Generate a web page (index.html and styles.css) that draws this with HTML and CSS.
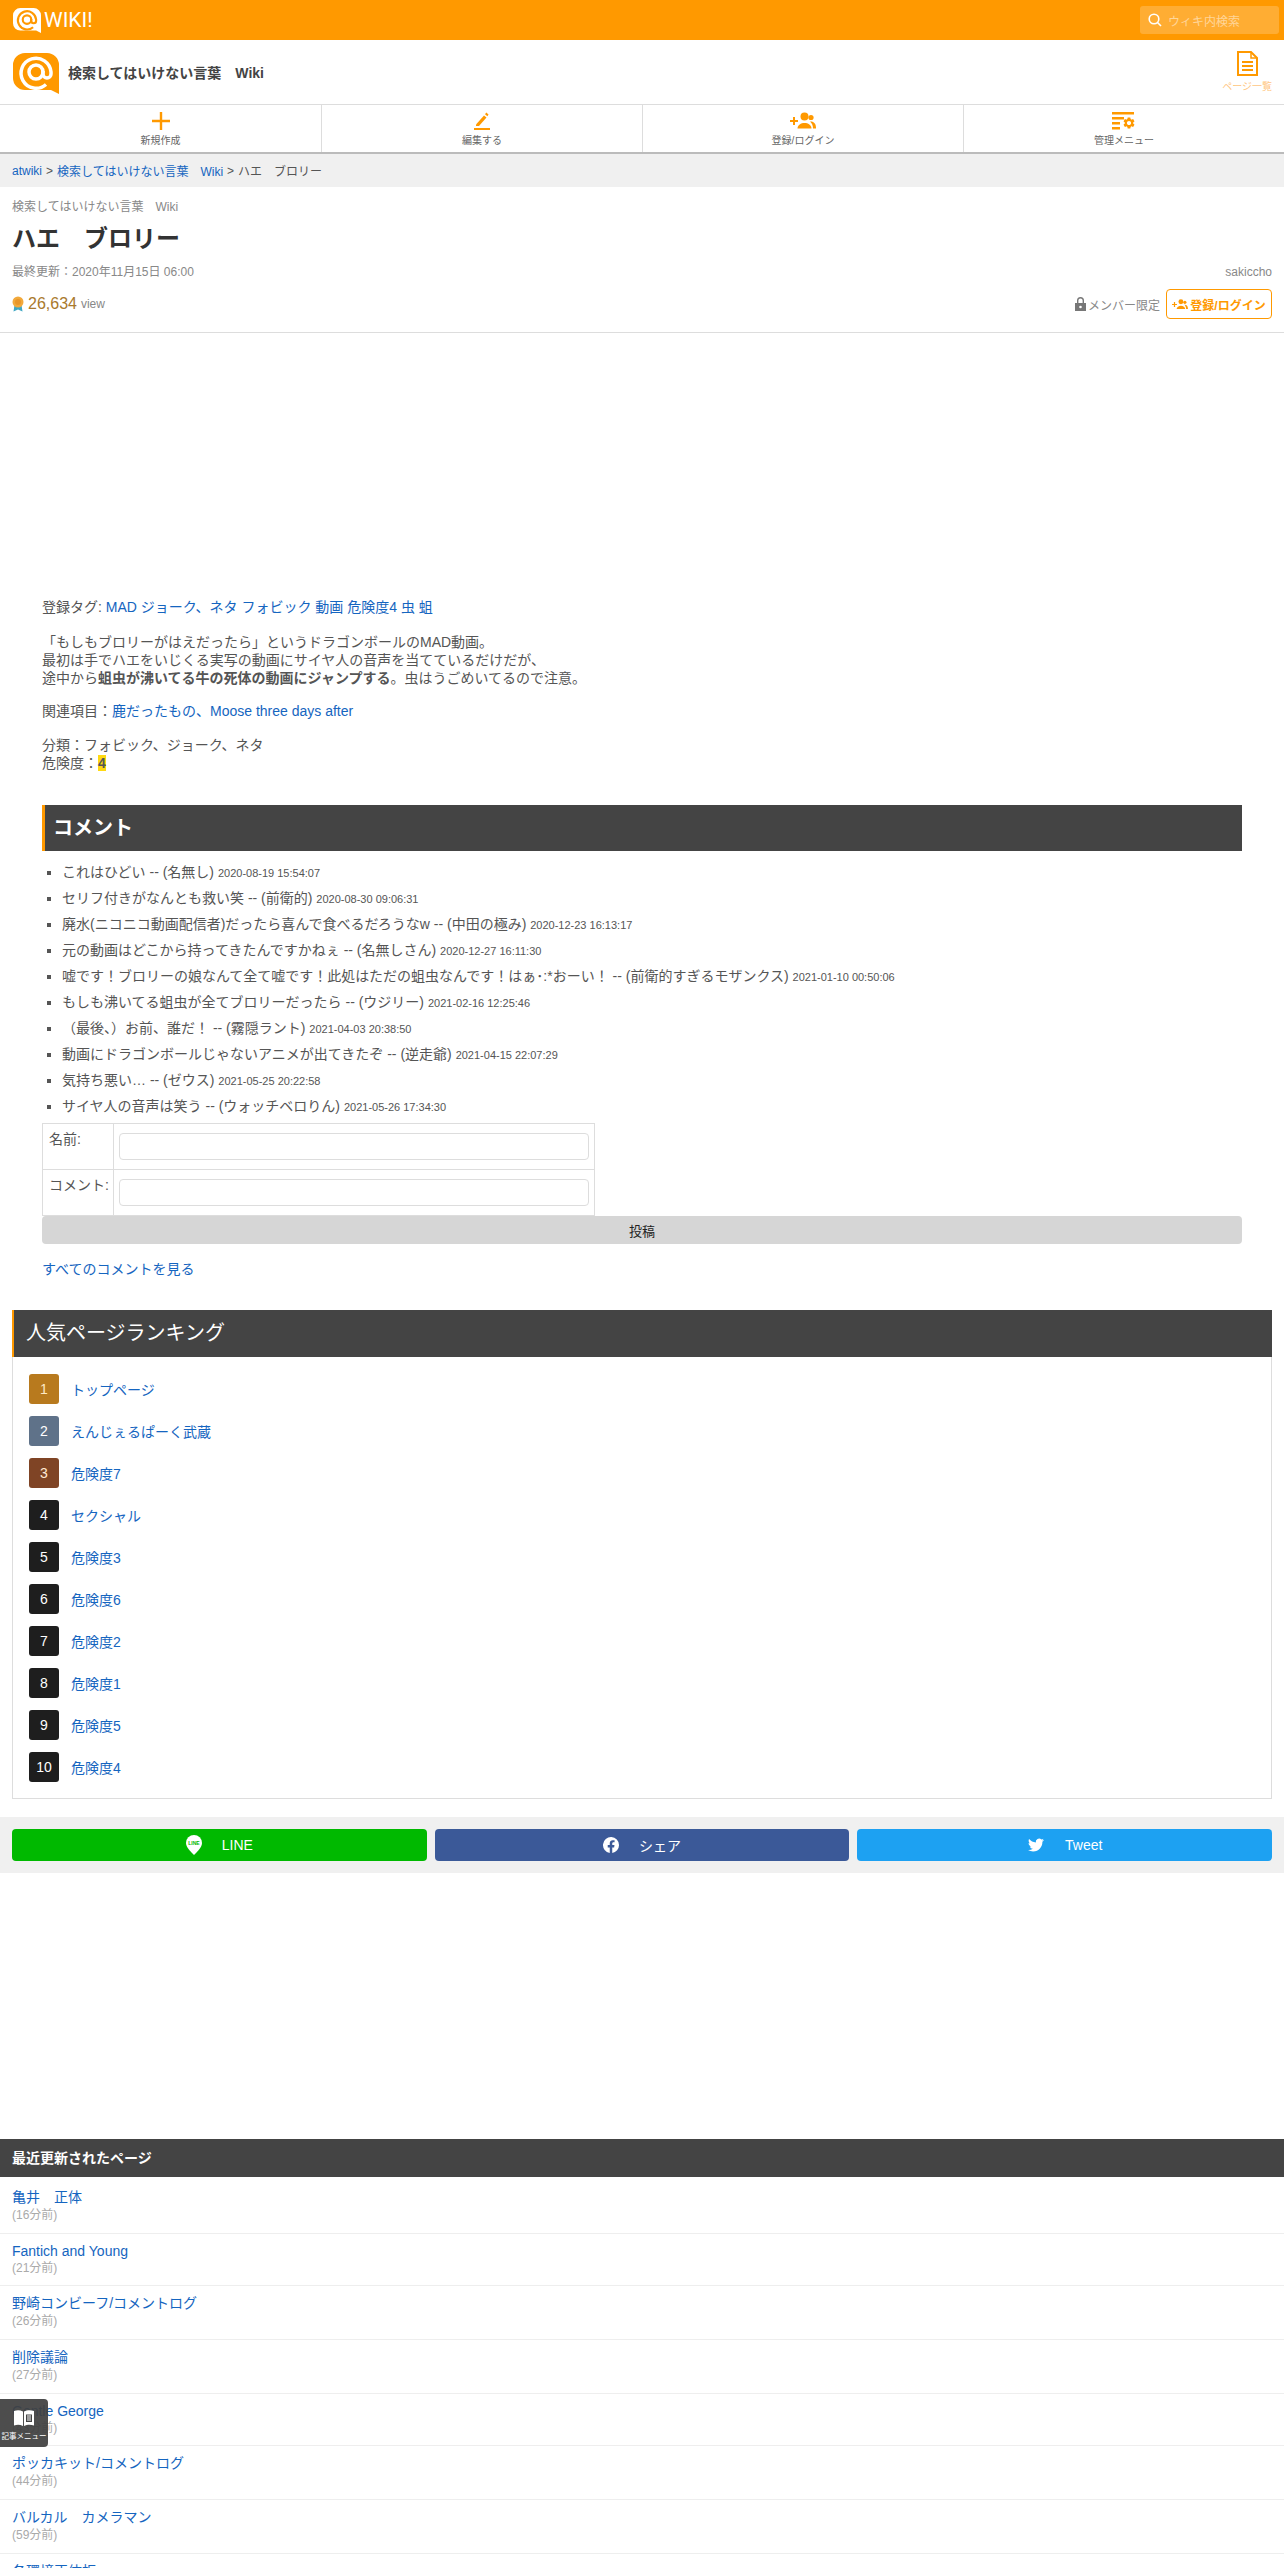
FILE: index.html
```html
<!DOCTYPE html>
<html lang="ja">
<head>
    <meta charset="UTF-8">
    <title>ハエ　ブロリー - 検索してはいけない言葉　Wiki</title>
    <link rel="stylesheet" href="styles.css">
</head>
<body>
<svg class="defs" width="0" height="0">
    <symbol id="at-logo" viewBox="0 0 46 41">
        <path class="logo-bubble" d="M12 0H34A12 12 0 0 1 46 12V41L38 37H12A12 12 0 0 1 0 25V12A12 12 0 0 1 12 0Z"/>
        <circle class="logo-at" cx="23" cy="19" r="7"/>
        <path class="logo-at" d="M33 31.5A15 15 0 1 1 38 19V21A4 4 0 0 1 30 21V18"/>
    </symbol>
    <symbol id="people-plus" viewBox="0 0 26 18">
        <path d="M0 8h3V5h2v3h3v2H5v3H3v-3H0z"/>
        <circle cx="14.5" cy="4.5" r="4"/>
        <path d="M7.5 16.500c0-3.500 3.500-5.500 7-5.500s7 2 7 5.500z"/>
        <circle cx="21" cy="5.500" r="2.600"/>
        <path d="M20 9.500c3.500-.5 6 2 6 6v1h-3c0-2.800-1-5.300-3-7z"/>
    </symbol>
</svg>

<header class="topbar">
    <a class="brand" href="#">
        <svg class="brand-logo" width="28" height="25"><use href="#at-logo"/></svg>
        <span class="brand-text">WIKI!</span>
    </a>
    <div class="search">
        <svg width="14" height="14" viewBox="0 0 14 14" fill="none" stroke="#fff" stroke-width="1.600"><circle cx="6" cy="6" r="4.800"/><path d="M9.500 9.500L13 13"/></svg>
        <span>ウィキ内検索</span>
    </div>
</header>

<div class="site-row">
    <svg class="site-logo" width="46" height="41"><use href="#at-logo"/></svg>
    <a class="site-title" href="#">検索してはいけない言葉　Wiki</a>
    <a class="page-list" href="#">
        <svg width="21" height="25" viewBox="0 0 21 25" fill="none" stroke="#f90" stroke-width="2"><path d="M1 1H14L20 7V24H1Z"/><path d="M14 1V7H20" stroke-width="1.500"/><path d="M5 11H16M5 15H16M5 19H16"/></svg>
        <span>ページ一覧</span>
    </a>
</div>

<nav class="nav">
    <a class="nav-item" href="#">
        <svg width="18" height="18" viewBox="0 0 18 18" fill="none" stroke="#f90" stroke-width="2.400"><path d="M9 0V18M0 9H18"/></svg>
        <span>新規作成</span>
    </a>
    <a class="nav-item" href="#">
        <svg width="18" height="18" viewBox="0 0 18 18" fill="#f90"><path d="M3 12.500L11 3.500L13.500 5.500L6 14H3z"/><path d="M12 2.300L13.300 .5L15.500 2.500L14.400 4.300z"/><path d="M1 16h16v2H1z"/></svg>
        <span>編集する</span>
    </a>
    <a class="nav-item" href="#">
        <svg class="orange-icon" width="26" height="18"><use href="#people-plus"/></svg>
        <span>登録/ログイン</span>
    </a>
    <a class="nav-item" href="#">
        <svg width="24" height="18" viewBox="0 0 24 18" fill="#f90"><path d="M0 0h22v2.500H0zM0 5h12v2.500H0zM0 10h8v2.500H0zM0 15h8v2.500H0z"/><svg x="10" y="4" width="14" height="14" viewBox="0 0 24 24"><path d="M19.140 12.940c.04-.3.06-.61.06-.94 0-.32-.02-.64-.07-.94l2.030-1.580a.49.49 0 0 0 .12-.61l-1.920-3.320a.488.488 0 0 0-.59-.22l-2.390.96c-.5-.38-1.030-.7-1.620-.94l-.36-2.540a.484.484 0 0 0-.48-.41h-3.840c-.24 0-.43.17-.47.41l-.36 2.540c-.59.24-1.130.57-1.620.94l-2.390-.96c-.22-.08-.47 0-.59.22L2.740 8.870c-.12.21-.08.47.12.61l2.030 1.580c-.05.3-.09.63-.09.94s.02.64.07.94l-2.030 1.580a.49.49 0 0 0-.12.61l1.920 3.320c.12.22.37.29.59.22l2.390-.96c.5.38 1.030.7 1.620.94l.36 2.540c.05.24.24.41.48.41h3.840c.24 0 .44-.17.47-.41l.36-2.540c.59-.24 1.130-.56 1.620-.94l2.390.96c.22.08.47 0 .59-.22l1.920-3.320c.12-.22.07-.47-.12-.61l-2.010-1.580zM12 15.600c-1.980 0-3.600-1.620-3.600-3.600s1.620-3.600 3.600-3.600 3.600 1.620 3.600 3.600-1.620 3.600-3.600 3.600z"/></svg></svg>
        <span>管理メニュー</span>
    </a>
</nav>

<div class="breadcrumb">
    <a href="#">atwiki</a><span class="sep">&gt;</span><a href="#">検索してはいけない言葉　Wiki</a><span class="sep">&gt;</span>ハエ　ブロリー
</div>

<section class="page-head">
    <div class="wiki-name">検索してはいけない言葉　Wiki</div>
    <h1>ハエ　ブロリー</h1>
    <div class="meta-row">
        <span>最終更新：2020年11月15日 06:00</span>
        <span>sakiccho</span>
    </div>
    <div class="foot-row">
        <div class="views">
            <svg width="12" height="16" viewBox="0 0 12 16"><path d="M2.500 9L1.500 15.500L6 13.500L10.500 15.500L9.500 9z" fill="#3fa7c4"/><circle cx="6" cy="6" r="5.500" fill="#f2a93b"/><circle cx="6" cy="6" r="3" fill="#e8962a"/></svg>
            <span class="view-count">26,634</span>
            <span>view</span>
        </div>
        <div class="member">
            <svg width="11" height="14" viewBox="0 0 11 14" fill="#777"><path d="M0 6h11v8H0z"/><path d="M2 6V3.500a3.500 3.500 0 0 1 7 0V6H7.600V3.500a2.100 2.100 0 0 0-4.200 0V6z"/><circle cx="5.500" cy="10" r="1.300" fill="#fff"/></svg>
            <span>メンバー限定</span>
            <a class="login-btn" href="#">
                <svg class="orange-icon" width="16" height="11"><use href="#people-plus"/></svg>
                登録/ログイン
            </a>
        </div>
    </div>
</section>

<div class="ad-space"></div>

<main class="article">
    <p>登録タグ: <a href="#">MAD</a> <a href="#">ジョーク、ネタ</a> <a href="#">フォビック</a> <a href="#">動画</a> <a href="#">危険度4</a> <a href="#">虫</a> <a href="#">蛆</a></p>
    <p class="gap-17">「もしもブロリーがはえだったら」というドラゴンボールのMAD動画。<br>
    最初は手でハエをいじくる実写の動画にサイヤ人の音声を当てているだけだが、<br>
    途中から<strong>蛆虫が沸いてる牛の死体の動画にジャンプする</strong>。虫はうごめいてるので注意。</p>
    <p class="gap-15">関連項目：<a href="#">鹿だったもの、Moose three days after</a></p>
    <p class="gap-16">分類：フォビック、ジョーク、ネタ<br>
    危険度：<span class="danger">4</span></p>

    <h2 class="comment-title">コメント</h2>
    <ul class="comments">
        <li>これはひどい -- (名無し) <small>2020-08-19 15:54:07</small></li>
        <li>セリフ付きがなんとも救い笑 -- (前衛的) <small>2020-08-30 09:06:31</small></li>
        <li>廃水(ニコニコ動画配信者)だったら喜んで食べるだろうなw -- (中田の極み) <small>2020-12-23 16:13:17</small></li>
        <li>元の動画はどこから持ってきたんですかねぇ -- (名無しさん) <small>2020-12-27 16:11:30</small></li>
        <li>嘘です！ブロリーの娘なんて全て嘘です！此処はただの蛆虫なんです！はぁ･:*おーい！ -- (前衛的すぎるモザンクス) <small>2021-01-10 00:50:06</small></li>
        <li>もしも沸いてる蛆虫が全てブロリーだったら -- (ウジリー) <small>2021-02-16 12:25:46</small></li>
        <li>（最後、）お前、誰だ！ -- (霧隠ラント) <small>2021-04-03 20:38:50</small></li>
        <li>動画にドラゴンボールじゃないアニメが出てきたぞ -- (逆走爺) <small>2021-04-15 22:07:29</small></li>
        <li>気持ち悪い… -- (ゼウス) <small>2021-05-25 20:22:58</small></li>
        <li>サイヤ人の音声は笑う -- (ウォッチベロりん) <small>2021-05-26 17:34:30</small></li>
    </ul>
    <table class="comment-form">
        <tr>
            <th>名前:</th>
            <td><input type="text"></td>
        </tr>
        <tr>
            <th>コメント:</th>
            <td><input type="text"></td>
        </tr>
    </table>
    <button class="post-btn">投稿</button>
    <p class="all-comments"><a href="#">すべてのコメントを見る</a></p>
</main>

<section class="ranking">
    <h2>人気ページランキング</h2>
    <ol class="rank-list">
        <li><span class="rank rank-1">1</span><a href="#">トップページ</a></li>
        <li><span class="rank rank-2">2</span><a href="#">えんじぇるぱーく武蔵</a></li>
        <li><span class="rank rank-3">3</span><a href="#">危険度7</a></li>
        <li><span class="rank">4</span><a href="#">セクシャル</a></li>
        <li><span class="rank">5</span><a href="#">危険度3</a></li>
        <li><span class="rank">6</span><a href="#">危険度6</a></li>
        <li><span class="rank">7</span><a href="#">危険度2</a></li>
        <li><span class="rank">8</span><a href="#">危険度1</a></li>
        <li><span class="rank">9</span><a href="#">危険度5</a></li>
        <li><span class="rank">10</span><a href="#">危険度4</a></li>
    </ol>
</section>

<div class="share">
    <a class="share-btn line" href="#">
        <svg width="16" height="20" viewBox="0 0 16 20"><path d="M8 0a8 8 0 0 1 8 8c0 4-4 8-8 12C4 16 0 12 0 8a8 8 0 0 1 8-8z" fill="#fff"/><text x="8" y="10" text-anchor="middle" class="line-mark">LINE</text></svg>
        LINE
    </a>
    <a class="share-btn facebook" href="#">
        <svg width="16" height="16" viewBox="0 0 16 16" fill="#fff"><path d="M16 8.050A8 8 0 1 0 6.750 16v-5.600H4.720V8.050h2.030V6.270c0-2 1.200-3.110 3.020-3.110.88 0 1.800.16 1.800.16v1.970h-1.010c-1 0-1.310.62-1.310 1.250v1.510h2.220l-.36 2.350H9.250V16A8 8 0 0 0 16 8.050z"/></svg>
        シェア
    </a>
    <a class="share-btn twitter" href="#">
        <svg width="18" height="16" viewBox="0 0 24 24" fill="#fff"><path d="M23.950 4.570a10 10 0 0 1-2.820.77 4.960 4.960 0 0 0 2.160-2.720c-.95.55-2 .96-3.120 1.190a4.920 4.920 0 0 0-8.380 4.480C7.690 8.100 4.070 6.130 1.640 3.160a4.820 4.820 0 0 0-.67 2.480c0 1.710.87 3.210 2.190 4.100a4.900 4.900 0 0 1-2.230-.61v.06c0 2.390 1.700 4.380 3.950 4.830a5 5 0 0 1-2.210.08 4.940 4.940 0 0 0 4.600 3.420A9.870 9.870 0 0 1 0 19.540a14 14 0 0 0 7.560 2.210c9.050 0 14-7.500 14-13.980 0-.21 0-.42-.02-.63a9.940 9.940 0 0 0 2.460-2.550z"/></svg>
        Tweet
    </a>
</div>

<section class="recent">
    <h2>最近更新されたページ</h2>
    <ul class="recent-list">
        <li class="first"><a href="#">亀井　正体</a><span>(16分前)</span></li>
        <li class="latin"><a href="#">Fantich and Young</a><span>(21分前)</span></li>
        <li><a href="#">野崎コンビーフ/コメントログ</a><span>(26分前)</span></li>
        <li><a href="#">削除議論</a><span>(27分前)</span></li>
        <li class="latin"><a href="#">Gentle George</a><span>(43分前)</span></li>
        <li><a href="#">ポッカキット/コメントログ</a><span>(44分前)</span></li>
        <li><a href="#">バルカル　カメラマン</a><span>(59分前)</span></li>
        <li><a href="#">各環境正体板</a><span>(60分前)</span></li>
    </ul>
</section>

<a class="float-menu" href="#">
    <svg width="20" height="16" viewBox="0 0 20 16"><path d="M0 1c3-1 6-1 9 .5V16c-3-1.500-6-1.500-9-.5z" fill="#fff"/><path d="M10 1.500c3-1.500 7-1.500 10-.5v14.500c-3-1-7-1-10 .5z" fill="#fff"/><path d="M12 4.500h6v7.500h-6z" fill="#444"/><path d="M13 6h4M13 8h4M13 10h4" stroke="#fff" stroke-width="1"/></svg>
    <span>記事メニュー</span>
</a>
</body>
</html>
```

FILE: styles.css
```css
html, body {
    height: 2568px;
    overflow: hidden;
}

body {
    position: relative;
    margin: 0;
    background-color: white;
    color: #555;
    font-family: "Liberation Sans", "Noto Sans CJK JP", sans-serif;
    font-size: 14px;
}

a {
    color: #1565c0;
    text-decoration: none;
}

.defs {
    position: absolute;
}

.logo-bubble {
    fill: currentColor;
}

.logo-at {
    fill: none;
    stroke: var(--at-color);
    stroke-width: 3.5;
}

.orange-icon {
    fill: #f90;
}

/* top bar */
.topbar {
    display: flex;
    align-items: center;
    justify-content: space-between;
    height: 40px;
    padding: 0 5px 0 13px;
    background-color: #f90;
}

.brand {
    display: flex;
    align-items: center;
    gap: 3px;
    color: white;
    --at-color: #f90;
}

.brand-text {
    font-family: Roboto, sans-serif;
    font-size: 21px;
    line-height: 26px;
}

.search {
    display: flex;
    align-items: center;
    gap: 6px;
    box-sizing: border-box;
    width: 139px;
    height: 28px;
    padding-left: 8px;
    border-radius: 3px;
    background-color: rgba(255,255,255,0.2);
    color: rgba(255,255,255,0.5);
    font-size: 12px;
}

/* site title */
.site-row {
    display: flex;
    align-items: center;
    height: 64px;
    padding: 0 12px 0 13px;
}

.site-logo {
    margin-top: 3px;
    color: #f90;
    --at-color: white;
}

.site-title {
    margin-left: 9px;
    color: #444;
    font-size: 14px;
    font-weight: bold;
}

.page-list {
    display: flex;
    flex-direction: column;
    align-items: center;
    gap: 2px;
    margin-left: auto;
    color: #ffc680;
    font-size: 10px;
}

/* nav */
.nav {
    display: grid;
    grid-template-columns: repeat(4, 1fr);
    box-sizing: border-box;
    height: 50px;
    border-top: 1px solid #ddd;
    border-bottom: 2px solid #bbb;
}

.nav-item {
    display: flex;
    flex-direction: column;
    align-items: center;
    gap: 2px;
    padding-top: 7px;
    border-left: 1px solid #ddd;
    color: #666;
    font-size: 10px;
}

.nav-item:first-child {
    border-left: 0;
}

.breadcrumb {
    display: flex;
    align-items: center;
    height: 33px;
    padding: 0 12px;
    background-color: #f0f0f0;
    font-size: 12px;
}

.sep {
    margin: 0 4px;
}

/* page head */
.page-head {
    box-sizing: border-box;
    height: 146px;
    padding: 13px 12px 0;
    border-bottom: 1px solid #ddd;
}

.wiki-name {
    color: #888;
    font-size: 12px;
    line-height: 14px;
}

h1 {
    margin: 10px 0;
    color: #333;
    font-size: 24px;
    line-height: 30px;
}

.meta-row {
    display: flex;
    justify-content: space-between;
    color: #888;
    font-size: 12px;
    line-height: 16px;
}

.foot-row {
    display: flex;
    justify-content: space-between;
    align-items: center;
    height: 30px;
    margin-top: 9px;
}

.views {
    display: flex;
    align-items: center;
    gap: 4px;
    color: #888;
    font-size: 12px;
}

.view-count {
    color: #a9792c;
    font-size: 16px;
}

.member {
    display: flex;
    align-items: center;
    gap: 2px;
    color: #888;
    font-size: 12px;
}

.login-btn {
    display: flex;
    align-items: center;
    justify-content: center;
    gap: 2px;
    box-sizing: border-box;
    width: 106px;
    height: 30px;
    margin-left: 4px;
    border: 1px solid #f90;
    border-radius: 4px;
    color: #f90;
    font-weight: bold;
}

.ad-space {
    height: 265px;
}

/* article */
.article {
    padding: 0 42px;
}

.article p {
    margin: 0;
    line-height: 18px;
}

.article .gap-17 {
    margin-top: 17px;
}

.article .gap-15 {
    margin-top: 15px;
}

.article .gap-16 {
    margin-top: 16px;
}

.danger {
    background-color: #ffd912;
    font-weight: bold;
}

.comment-title {
    box-sizing: border-box;
    height: 46px;
    margin: 33px 0 8px;
    padding-left: 8px;
    border-left: 3px solid #f90;
    background-color: #444;
    color: white;
    font-size: 20px;
    line-height: 46px;
}

.comments {
    margin: 0;
    padding: 0 0 0 20px;
    list-style-type: square;
}

.comments li {
    height: 26px;
    line-height: 26px;
    white-space: nowrap;
}

.comments small {
    font-size: 11px;
}

.comment-form {
    width: 553px;
    height: 93px;
    margin-top: 4px;
    border-collapse: collapse;
}

.comment-form th,
.comment-form td {
    padding: 0;
    border: 1px solid #ddd;
    vertical-align: top;
}

.comment-form th {
    width: 64px;
    padding: 6px 0 0 6px;
    font-weight: normal;
    line-height: 18px;
    text-align: left;
    white-space: nowrap;
}

.comment-form td {
    padding: 9px 5px 0;
}

.comment-form input {
    display: block;
    box-sizing: border-box;
    width: 100%;
    height: 27px;
    border: 1px solid #ddd;
    border-radius: 4px;
}

.post-btn {
    display: block;
    width: 100%;
    height: 28px;
    padding: 0;
    border: 0;
    border-radius: 4px;
    background-color: #d6d6d6;
    color: #222;
    font-family: inherit;
    font-size: 13px;
}

.article .all-comments {
    margin-top: 16px;
}

/* ranking */
.ranking {
    margin: 32px 12px 0;
}

.ranking h2 {
    box-sizing: border-box;
    height: 47px;
    margin: 0;
    padding-left: 12px;
    border-left: 2px solid #f90;
    background-color: #444;
    color: white;
    font-size: 20px;
    font-weight: normal;
    line-height: 47px;
}

.rank-list {
    display: flex;
    flex-direction: column;
    gap: 12px;
    margin: 0;
    padding: 17px 16px 16px;
    border: 1px solid #ddd;
    border-top: 0;
    list-style: none;
}

.rank-list li {
    display: flex;
    align-items: center;
    gap: 12px;
    height: 30px;
}

.rank {
    width: 30px;
    height: 30px;
    border-radius: 3px;
    background-color: #1e1e1e;
    color: white;
    line-height: 30px;
    text-align: center;
}

.rank-1 {
    background-color: #b87a1e;
    color: #ffe9c4;
}

.rank-2 {
    background-color: #5f7289;
}

.rank-3 {
    background-color: #7f4425;
    color: #ffe9d4;
}

/* share */
.share {
    display: flex;
    gap: 8px;
    margin-top: 18px;
    padding: 12px;
    background-color: #f0f0f0;
}

.share-btn {
    flex: 1;
    display: flex;
    align-items: center;
    justify-content: center;
    gap: 20px;
    height: 32px;
    border-radius: 4px;
    color: white;
}

.line {
    background-color: #00b900;
}

.facebook {
    background-color: #3b5998;
}

.twitter {
    background-color: #1da1f2;
}

.line-mark {
    fill: #00b900;
    font-size: 5px;
    font-weight: bold;
}

/* recent */
.recent {
    margin-top: 266px;
}

.recent h2 {
    height: 38px;
    margin: 0;
    padding-left: 12px;
    background-color: #444;
    color: white;
    font-size: 14px;
    line-height: 38px;
}

.recent-list {
    margin: 0;
    padding: 0;
    list-style: none;
}

.recent-list li {
    padding: 7px 12px 9px;
    border-bottom: 1px solid #eee;
}

.recent-list li.first {
    padding-top: 10px;
}

.recent-list li.latin {
    padding: 8px 12px;
}

.recent-list a,
.recent-list span {
    display: block;
}

.recent-list a {
    line-height: 20px;
}

.recent-list .latin a {
    line-height: 18px;
}

.recent-list span {
    color: #aaa;
    font-size: 12px;
    line-height: 17px;
}

.float-menu {
    position: absolute;
    left: 0;
    top: 2399px;
    display: flex;
    flex-direction: column;
    align-items: center;
    gap: 6px;
    box-sizing: border-box;
    width: 48px;
    height: 48px;
    padding-top: 11px;
    border-radius: 0 4px 4px 0;
    background-color: rgba(64,64,64,0.93);
    color: white;
    font-size: 7.5px;
    line-height: 10px;
    white-space: nowrap;
}
```
